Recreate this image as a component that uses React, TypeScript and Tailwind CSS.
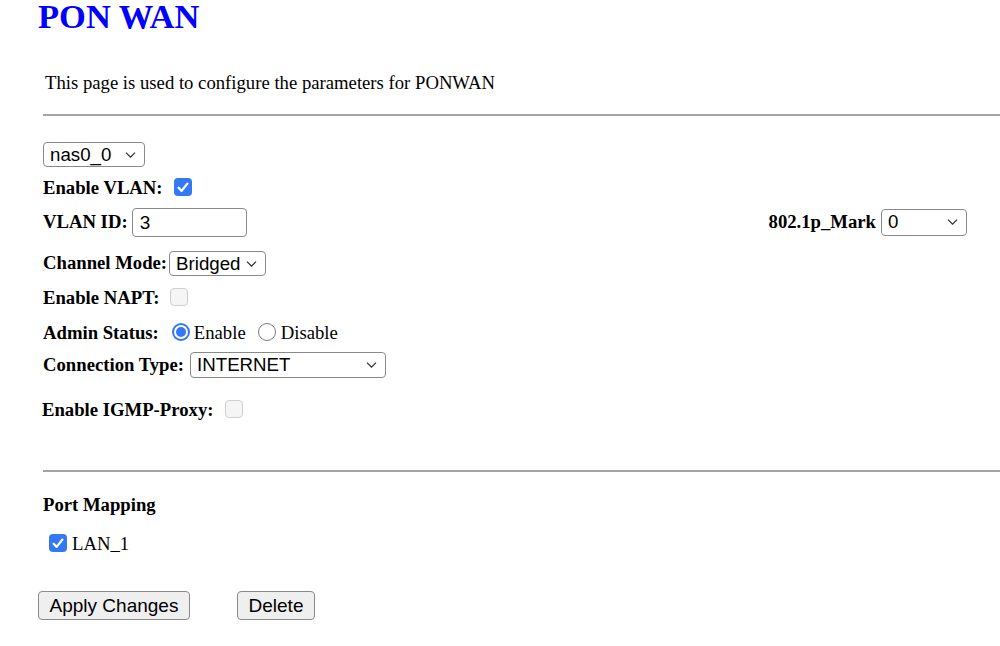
import React from "react";

const serif = { fontFamily: '"Liberation Serif", "Times New Roman", serif' };
const sans = { fontFamily: '"Liberation Sans", Arial, sans-serif' };

function Chevron() {
  return (
    <svg
      width="11"
      height="7"
      viewBox="0 0 11 7"
      className="pointer-events-none absolute right-[8px] top-1/2 -translate-y-1/2"
    >
      <path d="M1 1.2 L5.5 5.7 L10 1.2" fill="none" stroke="#2b2b2b" strokeWidth="1.2" />
    </svg>
  );
}

// drawn like a Safari select box
function Select({ value, width, height = 25 }: { value: string; width: number; height?: number }) {
  return (
    <div
      className="relative flex items-center rounded-[4px] border border-[#8a8a8a] bg-white pl-[6px] text-[18.7px] text-black"
      style={{ width, height, ...sans }}
    >
      <span className="leading-[22px]">{value}</span>
      <Chevron />
    </div>
  );
}

function Check({ on, disabled }: { on?: boolean; disabled?: boolean }) {
  if (disabled) {
    return <span className="inline-block h-[18px] w-[18px] rounded-[4px] border border-[#cfcfcf] bg-[#f5f5f5]" />;
  }
  return (
    <span className="inline-flex h-[18px] w-[18px] items-center justify-center rounded-[4px] bg-[#3478f6]">
      {on && (
        <svg width="12" height="11" viewBox="0 0 12 11">
          <path d="M1.6 5.8 L4.6 8.9 L10.4 1.6" fill="none" stroke="#fff" strokeWidth="2.3" strokeLinecap="round" strokeLinejoin="round" />
        </svg>
      )}
    </span>
  );
}

function Radio({ on }: { on?: boolean }) {
  if (on) {
    return (
      <span className="inline-flex h-[18px] w-[18px] items-center justify-center rounded-full bg-[#3478f6]">
        <span className="flex h-[14px] w-[14px] items-center justify-center rounded-full bg-white">
          <span className="h-[10px] w-[10px] rounded-full bg-[#3478f6]" />
        </span>
      </span>
    );
  }
  return <span className="inline-block h-[18px] w-[18px] rounded-full border border-[#7a7a7a] bg-white" />;
}

function Button({ label, width }: { label: string; width: number }) {
  return (
    <button
      className="h-[29px] rounded-[4px] border border-[#8a8a8a] bg-[#efefef] text-[19px] text-black"
      style={{ width, ...sans }}
    >
      {label}
    </button>
  );
}

export default function App() {
  return (
    <div className="h-[646px] w-[1000px] overflow-hidden bg-white text-[18.7px] text-black" style={serif}>
      <div className="flex flex-col pl-[43px]">
        <h1 className="-ml-[5px] flex h-[32px] items-center text-[34.5px] font-bold leading-[32px] text-[#0000ff]">
          PON WAN
        </h1>

        <p className="ml-[2px] mt-[39px] flex h-[24px] items-center">
          This page is used to configure the parameters for PONWAN
        </p>

        <div className="mt-[19px] h-[2px] bg-[#a3a3a3]" />

        <div className="mt-[26px] flex h-[25px] items-center">
          <Select value="nas0_0" width={102} />
        </div>

        <div className="mt-[8px] flex h-[24px] items-center">
          <span className="pt-[2px] font-bold">Enable VLAN:</span>
          <span className="ml-[11px] flex">
            <Check on />
          </span>
        </div>

        <div className="mt-[9px] flex h-[29px] w-[924px] items-center justify-between">
          <div className="flex items-center">
            <span className="font-bold">VLAN ID:</span>
            <input
              defaultValue="3"
              className="ml-[4px] h-[29px] w-[115px] rounded-[4px] border border-[#8a8a8a] bg-white px-[7px] text-[19px] outline-none"
              style={sans}
            />
          </div>
          <div className="flex items-center">
            <span className="font-bold">802.1p_Mark</span>
            <span className="ml-[5px] flex">
              <Select value="0" width={86} height={27} />
            </span>
          </div>
        </div>

        <div className="mt-[14px] flex h-[25px] items-center">
          <span className="font-bold">Channel Mode:</span>
          <span className="ml-[2px] flex">
            <Select value="Bridged" width={97} />
          </span>
        </div>

        <div className="mt-[9px] flex h-[24px] items-center">
          <span className="pt-[2px] font-bold">Enable NAPT:</span>
          <span className="ml-[11px] flex">
            <Check disabled />
          </span>
        </div>

        <div className="mt-[11px] flex h-[24px] items-center">
          <span className="pt-[2px] font-bold">Admin Status:</span>
          <span className="ml-[13px] flex">
            <Radio on />
          </span>
          <span className="ml-[4px] pt-[2px]">Enable</span>
          <span className="ml-[12px] flex">
            <Radio />
          </span>
          <span className="ml-[5px] pt-[2px]">Disable</span>
        </div>

        <div className="mt-[8px] flex h-[26px] items-center">
          <span className="font-bold">Connection Type:</span>
          <span className="ml-[6px] flex">
            <Select value="INTERNET" width={196} height={26} />
          </span>
        </div>

        <div className="-ml-[1px] mt-[19px] flex h-[24px] items-center">
          <span className="pt-[2px] font-bold">Enable IGMP-Proxy:</span>
          <span className="ml-[12px] flex">
            <Check disabled />
          </span>
        </div>

        <div className="mt-[49px] h-[2px] bg-[#a3a3a3]" />

        <div className="mt-[21px] flex h-[24px] items-center font-bold">Port Mapping</div>

        <div className="ml-[6px] mt-[14px] flex h-[24px] items-center">
          <Check on />
          <span className="ml-[5px] pt-[3px]">LAN_1</span>
        </div>

        <div className="-ml-[5px] mt-[36px] flex items-center">
          <Button label="Apply Changes" width={152} />
          <span className="ml-[47px] flex">
            <Button label="Delete" width={78} />
          </span>
        </div>
      </div>
    </div>
  );
}
